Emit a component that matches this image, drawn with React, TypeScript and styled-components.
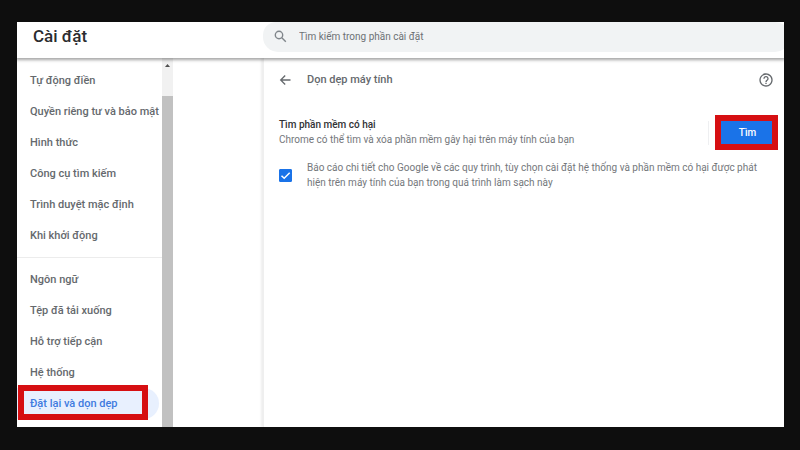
import React from 'react';
import styled, { createGlobalStyle } from 'styled-components';

const GlobalStyle = createGlobalStyle`
  *, *::before, *::after { box-sizing: border-box; }
  body {
    margin: 0;
    background: #0e0e0e;
    font-family: Roboto, "Noto Sans", sans-serif;
    color: #65696d;
  }
`;

const Page = styled.div`
  display: flex;
  min-height: 100vh;
  padding: 22px 16px 23px 17px;
`;

const SettingsWindow = styled.div`
  display: flex;
  flex-direction: column;
  flex: 1;
  min-width: 0;
  overflow: hidden;
  background: #fff;
`;

const Header = styled.header`
  display: grid;
  grid-template-columns: 246px 1fr;
  height: 36px;
  position: relative;
  z-index: 1;
  box-shadow: 0 1px 3px 1px rgba(0, 0, 0, 0.36);
  background: #fff;
`;

const Title = styled.h1`
  margin: 0;
  padding-left: 16px;
  font-size: 17px;
  line-height: 29px;
  font-weight: 500;
  color: #2b2c2f;
`;

const SearchBox = styled.label`
  display: flex;
  align-items: center;
  gap: 12px;
  height: 30px;
  padding: 0 12px 2px 11px;
  margin-right: -6px;
  border-radius: 14px 16px 16px 16px;
  background: #f1f3f4;
`;

const SearchInput = styled.input`
  flex: 1;
  min-width: 0;
  padding: 1px 0 0;
  border: 0;
  outline: 0;
  background: transparent;
  font: 400 10px/16px Roboto, "Noto Sans", sans-serif;
  color: #5f6368;
  &::placeholder { color: #6d7175; opacity: 1; }
`;

const Body = styled.div`
  display: grid;
  grid-template-columns: 145px 11px 1fr;
  flex: 1;
`;

const Nav = styled.nav`
  padding-top: 7px;
`;

const NavGroup = styled.ul`
  list-style: none;
  margin: 0;
  padding: 0 3px 6px 0;
  & + & {
    padding-top: 6px;
    border-top: 1px solid #ececec;
  }
`;

const NavLink = styled.a<{ $active?: boolean }>`
  display: flex;
  align-items: center;
  position: relative;
  height: 31px;
  padding-left: 13px;
  border-radius: 0 16px 16px 0;
  background: ${(p) => (p.$active ? '#e8f0fe' : 'transparent')};
  color: ${(p) => (p.$active ? '#3f7be0' : '#65696d')};
  font-size: 11px;
  line-height: 16px;
  font-weight: 500;
  white-space: nowrap;
  text-decoration: none;
`;

const NavMarker = styled.span`
  position: absolute;
  inset: -3px 11px -1px 1px;
  border: 6px solid #d60f12;
  pointer-events: none;
`;

const ScrollTrack = styled.div`
  display: flex;
  flex-direction: column;
  background: #f1f1f1;
`;

const ScrollArrow = styled.svg`
  width: 11px;
  height: 14px;
  margin-bottom: 24px;
`;

const ScrollThumb = styled.div`
  flex: 1;
  background: #c1c1c1;
`;

const Main = styled.main`
  margin-left: 90px;
  padding: 11px 6px 0 15px;
  border-left: 1px solid #efefef;
  box-shadow: -2px 0 2px #eeeeee;
`;

const PanelHeader = styled.div`
  display: flex;
  align-items: center;
  height: 22px;
  padding-right: 4px;
`;

const IconButton = styled.button`
  display: flex;
  padding: 0;
  border: 0;
  background: none;
  color: #65696d;
`;

const PanelTitle = styled.h2`
  flex: 1;
  margin: 0 0 0 15px;
  font-size: 11px;
  line-height: 16px;
  font-weight: 500;
`;

const FindRow = styled.section`
  display: flex;
  align-items: center;
  margin-top: 24px;
`;

const FindText = styled.div`
  flex: 1;
  padding-bottom: 2px;
  font-size: 10px;
  line-height: 15px;
  color: #74777b;
`;

const FindTitle = styled.h3`
  margin: 0;
  font-size: 10px;
  line-height: 15px;
  font-weight: 500;
  color: #303134;
`;

const Divider = styled.div`
  width: 1px;
  height: 24px;
  margin-right: 6px;
  background: #eeeff1;
`;

const ButtonMarker = styled.div`
  border: 6px solid #d60f12;
`;

const FindButton = styled.button`
  display: block;
  width: 51px;
  height: 23px;
  padding: 0 0 0 2px;
  border: 0;
  background: #1a73e8;
  color: #fff;
  font: 500 10px/16px Roboto, "Noto Sans", sans-serif;
`;

const ReportRow = styled.label`
  display: flex;
  align-items: center;
  gap: 15px;
  margin-top: 10px;
  padding-right: 16px;
  font-size: 10px;
  line-height: 15px;
  color: #74777b;
`;

const CheckWrap = styled.span`
  display: grid;
  flex: none;
  & > * { grid-area: 1 / 1; }
`;

const Checkbox = styled.input`
  appearance: none;
  width: 13px;
  height: 13px;
  margin: 0;
  border: 1px solid #1a73e8;
  border-radius: 1px;
  &:checked { background: #1a73e8; }
  &:not(:checked) + svg { display: none; }
`;

const mainLinks = [
  'Tự động điền',
  'Quyền riêng tư và bảo mật',
  'Hình thức',
  'Công cụ tìm kiếm',
  'Trình duyệt mặc định',
  'Khi khởi động',
];

const advancedLinks = [
  'Ngôn ngữ',
  'Tệp đã tải xuống',
  'Hỗ trợ tiếp cận',
  'Hệ thống',
  'Đặt lại và dọn dẹp',
];

function SearchIcon() {
  return (
    <svg width="13" height="13" viewBox="0 0 13 13" fill="none" stroke="#80868b" strokeWidth="1.4" aria-hidden="true">
      <circle cx="5" cy="5" r="3.7" />
      <path d="M7.8 7.8 11.8 11.8" />
    </svg>
  );
}

function BackIcon() {
  return (
    <svg width="13" height="13" viewBox="0 0 13 13" fill="none" stroke="currentColor" strokeWidth="1.3" aria-hidden="true">
      <path d="M11.5 6H2M6.2 1.500 1.700 6 6.200 10.500" />
    </svg>
  );
}

function HelpIcon() {
  return (
    <svg width="16" height="16" viewBox="0 0 24 24" fill="currentColor" aria-hidden="true">
      <path d="M11 18h2v-2h-2v2zm1-16C6.48 2 2 6.48 2 12s4.48 10 10 10 10-4.48 10-10S17.52 2 12 2zm0 18c-4.41 0-8-3.59-8-8s3.59-8 8-8 8 3.59 8 8-3.59 8-8 8zm0-14c-2.21 0-4 1.79-4 4h2c0-1.1.9-2 2-2s2 .9 2 2c0 2-3 1.75-3 5h2c0-2.25 3-2.5 3-5 0-2.21-1.79-4-4-4z" />
    </svg>
  );
}

export default function App() {
  return (
    <Page>
      <GlobalStyle />
      <SettingsWindow>
        <Header>
          <Title>Cài đặt</Title>
          <SearchBox>
            <SearchIcon />
            <SearchInput
              type="search"
              aria-label="Tìm kiếm trong phần cài đặt"
              placeholder="Tìm kiếm trong phần cài đặt"
            />
          </SearchBox>
        </Header>
        <Body>
          <Nav>
            <NavGroup>
              {mainLinks.map((label) => (
                <li key={label}>
                  <NavLink href="#">{label}</NavLink>
                </li>
              ))}
            </NavGroup>
            <NavGroup>
              {advancedLinks.map((label) => {
                const active = label === 'Đặt lại và dọn dẹp';
                return (
                  <li key={label}>
                    <NavLink href="#" $active={active} aria-current={active ? 'page' : undefined}>
                      {label}
                      {active && <NavMarker />}
                    </NavLink>
                  </li>
                );
              })}
            </NavGroup>
          </Nav>
          <ScrollTrack aria-hidden="true">
            <ScrollArrow viewBox="0 0 11 14">
              <path d="M3 9 5.5 6 8 9z" fill="#505050" />
            </ScrollArrow>
            <ScrollThumb />
          </ScrollTrack>
          <Main>
            <PanelHeader>
              <IconButton type="button" aria-label="Quay lại">
                <BackIcon />
              </IconButton>
              <PanelTitle>Dọn dẹp máy tính</PanelTitle>
              <IconButton type="button" aria-label="Trợ giúp">
                <HelpIcon />
              </IconButton>
            </PanelHeader>
            <FindRow>
              <FindText>
                <FindTitle>Tìm phần mềm có hại</FindTitle>
                Chrome có thể tìm và xóa phần mềm gây hại trên máy tính của bạn
              </FindText>
              <Divider />
              <ButtonMarker>
                <FindButton type="button">Tìm</FindButton>
              </ButtonMarker>
            </FindRow>
            <ReportRow>
              <CheckWrap>
                <Checkbox type="checkbox" defaultChecked />
                <svg width="13" height="13" viewBox="0 0 13 13" fill="none" stroke="#fff" strokeWidth="1.5" aria-hidden="true">
                  <path d="M2.5 6.7 5.2 9.3 10.7 3.7" />
                </svg>
              </CheckWrap>
              <span>
                Báo cáo chi tiết cho Google về các quy trình, tùy chọn cài đặt hệ thống và phần mềm có hại được phát
                hiện trên máy tính của bạn trong quá trình làm sạch này
              </span>
            </ReportRow>
          </Main>
        </Body>
      </SettingsWindow>
    </Page>
  );
}
